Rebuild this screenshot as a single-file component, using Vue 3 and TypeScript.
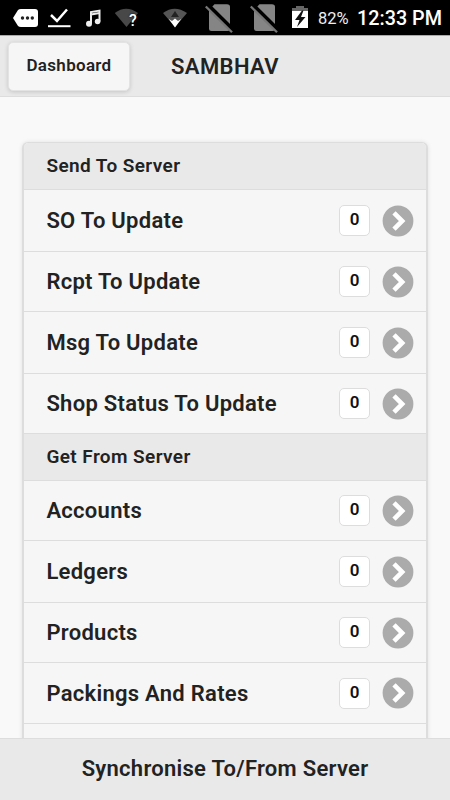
<script setup lang="ts">
interface SyncItem {
  label: string
  count: number
  height: number
}
interface SyncGroup {
  title: string
  height: number
  items: SyncItem[]
}

const groups: SyncGroup[] = [
  {
    title: 'Send To Server',
    height: 47,
    items: [
      { label: 'SO To Update', count: 0, height: 62 },
      { label: 'Rcpt To Update', count: 0, height: 60 },
      { label: 'Msg To Update', count: 0, height: 62 },
      { label: 'Shop Status To Update', count: 0, height: 60 },
    ],
  },
  {
    title: 'Get From Server',
    height: 47,
    items: [
      { label: 'Accounts', count: 0, height: 60 },
      { label: 'Ledgers', count: 0, height: 62 },
      { label: 'Products', count: 0, height: 60 },
      { label: 'Packings And Rates', count: 0, height: 61 },
    ],
  },
]
</script>

<template>
  <div class="screen">
    <div class="status">
      <svg class="status-icons" width="316" height="36" viewBox="0 0 316 36">
        <path d="M13 18 L18 10 Q19 9 21 9 H35 Q38 9 38 12 V24 Q38 27 35 27 H21 Q19 27 18 26 Z" fill="#fff" />
        <g fill="#222"><circle cx="22.5" cy="18" r="1.7" /><circle cx="27.5" cy="18" r="1.7" /><circle cx="32.3" cy="18" r="1.7" /></g>
        <path d="M51 15 L57 21 L67 9.5" fill="none" stroke="#fff" stroke-width="2.5" />
        <path d="M48 26.2 H70.5" stroke="#fff" stroke-width="2" />
        <path d="M91 23.5 V12 L99.5 10.6 V21.5 M91 14.5 L99.5 13" fill="none" stroke="#eee" stroke-width="2" />
        <circle cx="89" cy="23.7" r="3" fill="#eee" /><circle cx="97.6" cy="21.5" r="2.8" fill="#eee" />
        <path d="M114.8 13 Q126 4.500 138 13 L126.500 27 Z" fill="#484848" />
        <path d="M163 13 Q174.500 4.500 187 13 L175 27 Z" fill="#555" />
        <path d="M175 11 L179 17 H171 Z" fill="#222" />
        <path d="M168.800 19 L172 21 L175 18.500 L178 21 L181.200 19 L175 27.500 Z" fill="#fff" />
        <g v-for="x in [0, 45]" :key="x" :transform="`translate(${x} 0)`">
          <path d="M214.500 4.300 H227 Q230 4.300 230 7 V28.500 Q230 31 227.500 31 H211.500 Q209 31 209 28.500 V10 Z" fill="#858585" />
          <path d="M208 5.300 L234 31.200" stroke="#000" stroke-width="4.500" />
          <path d="M205.800 6.500 L232 32.300" stroke="#777" stroke-width="2.300" />
        </g>
        <path d="M292 12 V8 H296 V6 H304 V8 H308 V12 Z" fill="#666" />
        <path d="M292 11 H308 V28 H292 Z" fill="#fff" />
        <path d="M302 10.500 L295 20 H299.500 L297 27 L305.500 17 H301 L303.500 10.500 Z" fill="#111" />
      </svg>
      <span class="unknown">?</span>
      <span class="battery">82%</span>
      <span class="clock">12:33 PM</span>
    </div>

    <header class="header">
      <button class="back">Dashboard</button>
      <h1 class="title">SAMBHAV</h1>
    </header>

    <main class="content">
      <div class="list">
        <template v-for="group in groups" :key="group.title">
          <div class="divider" :style="{ height: group.height + 'px' }">{{ group.title }}</div>
          <div v-for="item in group.items" :key="item.label" class="row" :style="{ height: item.height + 'px' }">
            <span class="label">{{ item.label }}</span>
            <span class="count">{{ item.count }}</span>
            <svg class="go" width="32" height="32" viewBox="0 0 32 32">
              <circle cx="16" cy="16" r="15.400" fill="#ababab" />
              <path d="M12 7.800 L20.200 16 L12 24.200" fill="none" stroke="#fff" stroke-width="4.600" />
            </svg>
          </div>
        </template>
        <div class="row rest"></div>
      </div>
    </main>

    <footer class="footer">Synchronise To/From Server</footer>
  </div>
</template>

<style>
body {
  margin: 0;
}
</style>

<style scoped>
.screen {
  width: 450px;
  height: 800px;
  display: flex;
  flex-direction: column;
  overflow: hidden;
  background: #f9f9f9;
  color: #222;
  font-family: Roboto, sans-serif;
  font-weight: 600;
}
.status {
  position: relative;
  height: 35px;
  flex: none;
  display: flex;
  align-items: center;
  background: #000;
  color: #fff;
  overflow: hidden;
  white-space: nowrap;
}
.status-icons {
  flex: none;
  align-self: flex-start;
}
.unknown {
  position: absolute;
  left: 129px;
  top: 12px;
  font-size: 16px;
  line-height: 18px;
  font-weight: 500;
  text-shadow: 0 0 2px #000;
}
.battery {
  margin-left: 2px;
  width: 39px;
  font-size: 16.5px;
  font-weight: 400;
  color: #eee;
  padding-top: 2px;
}
.clock {
  font-size: 19.8px;
  font-weight: 500;
  padding-top: 2px;
}
.header {
  box-sizing: border-box;
  height: 62px;
  flex: none;
  display: flex;
  align-items: flex-start;
  padding: 6px 0 0 8px;
  background: #e9e9e9;
  border-top: 1px solid #aaa;
  border-bottom: 1px solid #ddd;
}
.back {
  box-sizing: border-box;
  width: 122px;
  height: 49px;
  padding: 0 0 3px;
  border: 1px solid #e3e3e3;
  border-radius: 5px;
  background: #f6f6f6;
  box-shadow: 0 1px 4px rgba(0, 0, 0, 0.16);
  font: 600 17px Roboto, sans-serif;
  letter-spacing: 0.3px;
  color: #222;
}
.title {
  margin: 0 0 0 41px;
  font-size: 22px;
  line-height: 49px;
  font-weight: 600;
  letter-spacing: 0.4px;
}
.content {
  flex: 1;
  min-height: 0;
  overflow: hidden;
  padding: 45px 22px 0;
}
.list {
  border: 1px solid #ddd;
  border-width: 1px 2px 0;
  border-radius: 6px 6px 0 0;
  background: #f6f6f6;
  box-shadow: 0 0 4px rgba(0, 0, 0, 0.1);
  overflow: hidden;
}
.divider,
.row {
  box-sizing: border-box;
  display: flex;
  align-items: center;
  border-bottom: 1px solid #ddd;
  padding-left: 22.4px;
}
.divider {
  background: #e9e9e9;
  padding-bottom: 2px;
  font-size: 19px;
  letter-spacing: 0.4px;
}
.row {
  padding-right: 12px;
  font-size: 22px;
  letter-spacing: 0.28px;
}
.label {
  flex: 1;
}
.count {
  box-sizing: border-box;
  width: 31px;
  height: 31px;
  margin-right: 12px;
  border: 1px solid #ddd;
  border-radius: 5px;
  background: #fff;
  color: #111;
  font-size: 17px;
  line-height: 27px;
  letter-spacing: 0;
  text-align: center;
}
.go {
  flex: none;
}
.rest {
  height: 61px;
}
.footer {
  box-sizing: border-box;
  height: 62px;
  flex: none;
  border-top: 1px solid #ddd;
  background: #e9e9e9;
  font-size: 22px;
  line-height: 60px;
  letter-spacing: 0.27px;
  text-align: center;
}
</style>
